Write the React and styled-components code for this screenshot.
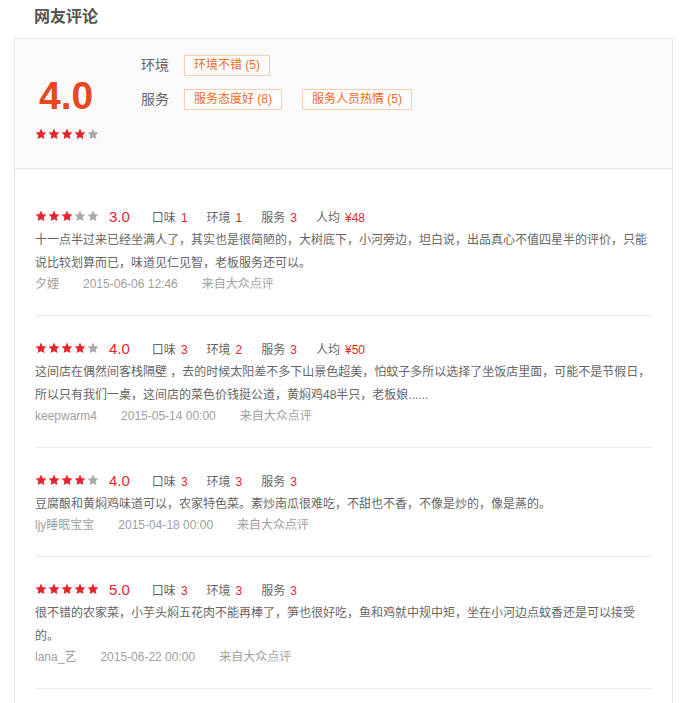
import React from "react";
import styled, { createGlobalStyle } from "styled-components";

const GlobalStyle = createGlobalStyle`
    html, body {
        margin: 0;
        padding: 0;
        background: #fff;
    }
    body {
        font-family: "Liberation Sans", "Noto Sans CJK SC", sans-serif;
        font-size: 12px;
        color: #666;
    }
`;

const Page = styled.div`
    padding: 0 15px 0 14px;
`;

const Title = styled.h2`
    margin: 5px 0 9px;
    padding-left: 20px;
    font-size: 16px;
    line-height: 24px;
    font-weight: bold;
    color: #555;
`;

const Box = styled.div`
    border: 1px solid #e6e6e6;
    border-radius: 2px;
`;

const Summary = styled.div`
    display: flex;
    height: 130px;
    box-sizing: border-box;
    padding: 16px 20px 0;
    background: #fafafa;
    border-bottom: 1px solid #e6e6e6;
`;

const ScoreCol = styled.div`
    width: 106px;
    padding-top: 18px;
`;

const BigScore = styled.div`
    font-size: 39px;
    line-height: 46px;
    font-weight: bold;
    color: #e8481e;
    padding-left: 4px;
`;

const Tags = styled.div`
    display: flex;
    flex-direction: column;
    gap: 13px;
`;

const TagRow = styled.div`
    display: flex;
    align-items: center;
`;

const TagLabel = styled.span`
    width: 29px;
    font-size: 14px;
    color: #666;
    line-height: 21px;
    margin-right: 14px;
`;

const Tag = styled.span`
    height: 21px;
    box-sizing: border-box;
    padding: 0 9px;
    border: 1px solid #f9cdae;
    background: #fff;
    color: #f0691c;
    font-size: 12px;
    line-height: 19px;
    white-space: nowrap;

    & + & {
        margin-left: 20px;
    }
`;

const List = styled.div`
    padding: 15px 20px 30px;
`;

const Review = styled.div`
    padding: 21px 0 22px;
    border-bottom: 1px solid #ebebeb;
`;

const RateRow = styled.div`
    display: flex;
    align-items: center;
    height: 22px;
    margin-bottom: 2px;
`;

const StarBox = styled.span`
    display: inline-flex;
    gap: 1px;
    margin-top: ${(p) => p.$top || 0}px;
`;

const RateNum = styled.span`
    margin-left: 10px;
    margin-right: 22px;
    font-size: 15px;
    color: #e4252e;
`;

const Item = styled.span`
    margin-right: 19px;
    font-size: 12px;
    color: #666;

    em {
        font-style: normal;
        color: #e4252e;
        margin-left: 5px;
    }
`;

const Body = styled.p`
    margin: 0;
    font-size: 12px;
    line-height: 23px;
    color: #666;
`;

const Meta = styled.div`
    display: flex;
    gap: 24px;
    font-size: 12px;
    line-height: 18px;
    color: #a0a0a0;
`;

const Star = ({ on }) => (
    <svg width="12" height="12" viewBox="0 0 24 24">
        <path
            d="M12 1.2l3.3 7.1 7.7.9-5.7 5.3 1.5 7.7L12 18.4l-6.8 3.8 1.5-7.7L1 9.2l7.7-.9z"
            fill={on ? "#e4252e" : "#aaaaaa"}
        />
    </svg>
);

const Stars = ({ n, top }) => (
    <StarBox $top={top}>
        {[0, 1, 2, 3, 4].map((i) => (
            <Star key={i} on={i < n} />
        ))}
    </StarBox>
);

const reviews = [
    {
        stars: 3,
        score: "3.0",
        items: [
            ["口味", "1"],
            ["环境", "1"],
            ["服务", "3"],
            ["人均", "¥48"],
        ],
        text: "十一点半过来已经坐满人了，其实也是很简陋的，大树底下，小河旁边，坦白说，出品真心不值四星半的评价，只能说比较划算而已，味道见仁见智，老板服务还可以。",
        user: "夕娌",
        date: "2015-06-06 12:46",
    },
    {
        stars: 4,
        score: "4.0",
        items: [
            ["口味", "3"],
            ["环境", "2"],
            ["服务", "3"],
            ["人均", "¥50"],
        ],
        text: "这间店在偶然间客栈隔壁 ，去的时候太阳差不多下山景色超美，怕蚊子多所以选择了坐饭店里面，可能不是节假日，所以只有我们一桌，这间店的菜色价钱挺公道，黄焖鸡48半只，老板娘......",
        user: "keepwarm4",
        date: "2015-05-14 00:00",
    },
    {
        stars: 4,
        score: "4.0",
        items: [
            ["口味", "3"],
            ["环境", "3"],
            ["服务", "3"],
        ],
        text: "豆腐酿和黄焖鸡味道可以，农家特色菜。素炒南瓜很难吃，不甜也不香，不像是炒的，像是蒸的。",
        user: "ljy睡眠宝宝",
        date: "2015-04-18 00:00",
    },
    {
        stars: 5,
        score: "5.0",
        items: [
            ["口味", "3"],
            ["环境", "3"],
            ["服务", "3"],
        ],
        text: "很不错的农家菜，小芋头焖五花肉不能再棒了，笋也很好吃，鱼和鸡就中规中矩，坐在小河边点蚊香还是可以接受的。",
        user: "lana_艺",
        date: "2015-06-22 00:00",
    },
];

const App = () => (
    <Page>
        <GlobalStyle />
        <Title>网友评论</Title>
        <Box>
            <Summary>
                <ScoreCol>
                    <BigScore>4.0</BigScore>
                    <Stars n={4} top={9} />
                </ScoreCol>
                <Tags>
                    <TagRow>
                        <TagLabel>环境</TagLabel>
                        <Tag>环境不错 (5)</Tag>
                    </TagRow>
                    <TagRow>
                        <TagLabel>服务</TagLabel>
                        <Tag>服务态度好 (8)</Tag>
                        <Tag>服务人员热情 (5)</Tag>
                    </TagRow>
                </Tags>
            </Summary>
            <List>
                {reviews.map((r, i) => (
                    <Review key={i}>
                        <RateRow>
                            <Stars n={r.stars} />
                            <RateNum>{r.score}</RateNum>
                            {r.items.map(([k, v]) => (
                                <Item key={k}>
                                    {k}
                                    <em>{v}</em>
                                </Item>
                            ))}
                        </RateRow>
                        <Body>{r.text}</Body>
                        <Meta>
                            <span>{r.user}</span>
                            <span>{r.date}</span>
                            <span>来自大众点评</span>
                        </Meta>
                    </Review>
                ))}
            </List>
        </Box>
    </Page>
);

export default App;
